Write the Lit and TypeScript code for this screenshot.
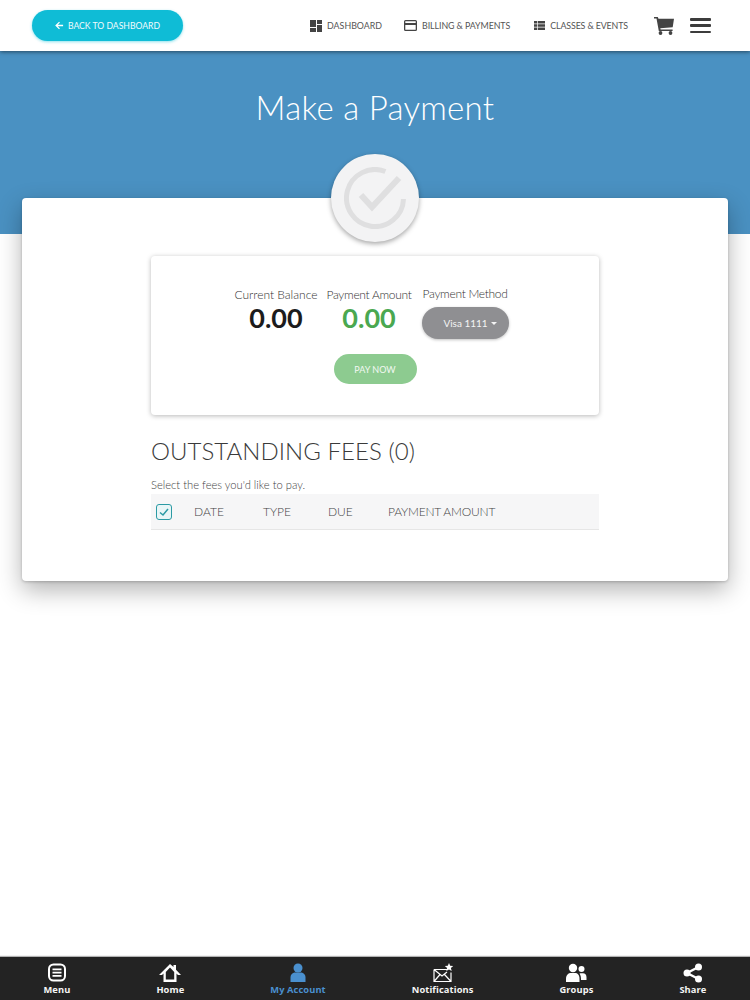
import { LitElement, html, css } from "lit";
import { customElement } from "lit/decorators.js";

@customElement("app-root")
export class AppRoot extends LitElement {
  static styles = css`
    :host { display: flex; flex-direction: column; height: 1000px; background: #fff; font-family: Lato, "Liberation Sans", sans-serif; color: #444; overflow: hidden; }
    .top { height: 51px; flex: none; display: flex; align-items: center; padding: 0 39px 0 32px; background: #fff; position: relative; z-index: 2; box-shadow: 0 1px 4px rgba(0,0,0,.5); }
    .back { width: 151px; height: 31px; border-radius: 16px; background: #0fbcd6; color: #f2fbfd; font-size: 8.65px; display: flex; align-items: center; justify-content: center; gap: 4px; box-shadow: 0 1px 3px rgba(0,188,212,.45); margin-top: -1px; }
    .back svg { width: 9px; height: 9px; }
    .links { margin-left: auto; display: flex; align-items: center; }
    .link { display: flex; align-items: center; gap: 5px; font-size: 8.85px; color: #555; white-space: nowrap; }
    .link svg { fill: #444; display: block; }
    .l1 { margin-right: 22px; }
    .l2 { margin-right: 24px; letter-spacing: -.08px; }
    .l3 { margin-right: 26px; letter-spacing: -.12px; }
    .cart { width: 20px; height: 18px; margin-right: 16px; fill: #444; display: block; }
    .burger { width: 21px; height: 15px; display: flex; flex-direction: column; justify-content: space-between; }
    .burger i { display: block; height: 2.5px; background: #3c3c3c; border-radius: 1px; }
    .hero { height: 183px; flex: none; background: #4a91c2; color: #fff; text-align: center; }
    .hero h1 { margin: 0; padding-top: 33px; font-size: 33px; line-height: 46px; font-weight: 300; letter-spacing: .28px; }
    .card { position: relative; flex: none; margin: -36px 22px 0; height: 383px; background: #fff; border-radius: 4px; box-shadow: 0 9px 24px rgba(0,0,0,.3), 0 1px 3px rgba(0,0,0,.2); padding: 58px 129px 0; box-sizing: border-box; }
    .seal { position: absolute; left: 309px; top: -44px; width: 88px; height: 88px; border-radius: 50%; background: #f3f3f4; box-shadow: 0 2px 5px rgba(0,0,0,.35); display: flex; align-items: center; justify-content: center; }
    .seal svg { width: 62px; height: 62px; display: block; }
    .panel { height: 159px; border-radius: 4px; box-shadow: 0 1px 5px rgba(0,0,0,.28); display: flex; flex-direction: column; align-items: center; padding-top: 29px; box-sizing: border-box; }
    .cols { display: flex; align-items: flex-start; gap: 9px; margin-right: 7px; }
    .col { display: flex; flex-direction: column; align-items: center; }
    .col.m { margin-left: 1px; }
    .lab { font-size: 12px; font-weight: 300; color: #333; line-height: 20px; white-space: nowrap; }
    .lab.t { letter-spacing: -.3px; }
    .lab.up { margin-top: -1px; }
    .val { font-size: 27px; font-weight: 700; line-height: 28px; color: #1c1c1c; margin-top: -1px; }
    .val.g { color: #4aa850; }
    .sel { width: 87px; height: 32px; margin-top: 3px; border-radius: 16px; background: #8f8f92; color: #f4f4f4; font-size: 10px; display: flex; align-items: center; justify-content: center; gap: 3px; padding-left: 10px; box-sizing: border-box; box-shadow: 0 1px 3px rgba(0,0,0,.25); }
    .caret { width: 0; height: 0; border-left: 3px solid transparent; border-right: 3px solid transparent; border-top: 3px solid #f4f4f4; }
    .pay { margin-top: 15px; width: 83px; height: 30px; border-radius: 15px; background: #8dcb90; color: #f2f8f2; font-size: 9px; display: flex; align-items: center; justify-content: center; }
    h2 { margin: 20px 0 0; font-size: 24px; line-height: 32px; font-weight: 300; color: #3a3a3a; letter-spacing: .05px; }
    .hint { margin: 10px 0 1px; font-size: 11.2px; line-height: 16px; font-weight: 300; color: #444; }
    .thead { height: 36px; background: #f6f6f7; border-bottom: 1px solid #e6e6e6; display: flex; align-items: center; font-size: 12px; font-weight: 300; color: #444; box-sizing: border-box; }
    .box { width: 16px; height: 16px; box-sizing: border-box; border: 1.5px solid #2b9aa4; border-radius: 3px; margin-left: 5px; background: #e9f6f7; display: flex; align-items: center; justify-content: center; }
    .box svg { width: 10px; height: 10px; }
    .h1 { margin-left: 22px; width: 69px; }
    .h2 { width: 65px; }
    .h3 { width: 60px; }
    .h4 { letter-spacing: -.2px; }
    .nav { margin-top: auto; height: 43px; flex: none; box-sizing: border-box; padding: 6px 43.5px 0; background: #232323; display: flex; justify-content: space-between; box-shadow: 0 -1px 1px rgba(0,0,0,.3); font-family: "Open Sans", sans-serif; font-weight: 700; font-size: 9.3px; color: #f5f5f5; }
    .it { display: flex; flex-direction: column; align-items: center; white-space: nowrap; }
    .it svg { width: 22px; height: 20px; display: block; fill: #fff; }
    .it span { line-height: 12px; margin-top: 1px; letter-spacing: .1px; }
    .it.on { color: #4a90cf; }
    .it.on svg { fill: #4a90cf; }
  `;

  render() {
    return html`
      <div class="top">
        <div class="back">
          <svg viewBox="0 0 10 10" fill="none" stroke="#fff" stroke-width="1.4"><path d="M9 5H1.5M5 1.2 1.2 5 5 8.8"/></svg>
          BACK TO DASHBOARD
        </div>
        <div class="links">
          <div class="link l1"><svg width="12" height="12" viewBox="0 0 12 12"><path d="M0 0h6v7H0zM7 0h5v4H7zM0 8h6v4H0zM7 5h5v7H7z"/></svg>DASHBOARD</div>
          <div class="link l2"><svg width="13" height="11" viewBox="0 0 13 11"><path fill-rule="evenodd" d="M1.5 0h10A1.5 1.5 0 0 1 13 1.5v8a1.5 1.5 0 0 1-1.5 1.5h-10A1.5 1.5 0 0 1 0 9.5v-8A1.5 1.5 0 0 1 1.5 0zM1.3 1.3v1.7h10.4V1.3zM1.3 5v4.7h10.4V5z"/></svg>BILLING &amp; PAYMENTS</div>
          <div class="link l3"><svg width="11" height="9" viewBox="0 0 11 9"><path d="M0 0h3v2.5H0zM3.7 0H11v2.5H3.7zM0 3.2h3v2.6H0zM3.7 3.2H11v2.6H3.7zM0 6.5h3V9H0zM3.7 6.5H11V9H3.7z"/></svg>CLASSES &amp; EVENTS</div>
          <svg class="cart" viewBox="0 0 20 18"><path d="M0 0h3.8l.7 1.8H20l-1.300 8.400-12.400 1 .3 1.300h12v1.600H4.800L2.500 1.500H0z"/><circle cx="6.500" cy="16" r="1.900"/><circle cx="16.500" cy="16" r="1.900"/></svg>
          <div class="burger"><i></i><i></i><i></i></div>
        </div>
      </div>
      <div class="hero"><h1>Make a Payment</h1></div>
      <div class="card">
        <div class="seal">
          <svg viewBox="0 0 62 62" fill="none" stroke="#dfdfe0" stroke-width="5"><path d="M41.400 4.500A28.500 28.500 0 1 0 59.500 32"/><path d="M17 28l11 12 27-29" stroke-width="6"/></svg>
        </div>
        <div class="panel">
          <div class="cols">
            <div class="col"><div class="lab">Current Balance</div><div class="val">0.00</div></div>
            <div class="col"><div class="lab t">Payment Amount</div><div class="val g">0.00</div></div>
            <div class="col m"><div class="lab t up">Payment Method</div><div class="sel">Visa 1111 <span class="caret"></span></div></div>
          </div>
          <div class="pay">PAY NOW</div>
        </div>
        <h2>OUTSTANDING FEES (0)</h2>
        <div class="hint">Select the fees you'd like to pay.</div>
        <div class="thead">
          <div class="box"><svg viewBox="0 0 10 10" fill="none" stroke="#2b9aa4" stroke-width="1.500"><path d="M1 5.500 4 8l5-6"/></svg></div>
          <div class="h1">DATE</div><div class="h2">TYPE</div><div class="h3">DUE</div><div class="h4">PAYMENT AMOUNT</div>
        </div>
      </div>
      <div class="nav">
        <div class="it"><svg viewBox="0 0 22 20"><rect x="3" y="1.500" width="16" height="16" rx="4.500" fill="none" stroke="#fff" stroke-width="2"/><path d="M6.500 5.500h9v1.800h-9zM6.500 8.700h9v1.800h-9zM6.500 11.900h9v1.800h-9z"/></svg><span>Menu</span></div>
        <div class="it"><svg viewBox="0 0 22 20"><path fill-rule="evenodd" d="M11 1l3.500 3V2h2.500v4.800l5 5.200h-3l-1.500-1.500v8.500H4.500V10.500L3 12H0zM11 4.500 6.800 9v7.500h8.400V9z"/></svg><span>Home</span></div>
        <div class="it on"><svg viewBox="0 0 22 20"><circle cx="11" cy="5" r="4.500"/><path d="M3.500 19v-4.500C3.500 11 6 9.500 8.500 9.500h5c2.500 0 5 1.500 5 5V19z"/></svg><span>My Account</span></div>
        <div class="it"><svg viewBox="0 0 22 20"><path d="M2 6.500h13M2 6.500v12h17v-9M2 6.500l8 6.500 5-4M2 18.500l6-7M19 18.500l-6.500-7" fill="none" stroke="#fff" stroke-width="1.200"/><path d="M17 0l1.200 2.800 3 .2-2.300 2 .8 3L17 6.400 14.300 8l.8-3-2.300-2 3-.2z"/></svg><span>Notifications</span></div>
        <div class="it"><svg viewBox="0 0 22 20"><circle cx="8" cy="5" r="4.200"/><path d="M1 19v-3.500C1 12 3.500 10 6 10h4c2.500 0 4.500 2 4.500 5.500V19z"/><circle cx="16.500" cy="6" r="3"/><path d="M15.500 10.200h2.500c2 0 3.500 1.500 3.500 4V17h-5.500c0-2.500-.2-4.800-1.500-6.500z"/></svg><span>Groups</span></div>
        <div class="it"><svg viewBox="0 0 22 20"><circle cx="16.500" cy="4" r="3.500"/><circle cx="16.500" cy="16" r="3.500"/><circle cx="5" cy="10" r="3.500"/><path d="M5 10 16.500 4M5 10l11.500 6" stroke="#fff" stroke-width="2.500" fill="none"/></svg><span>Share</span></div>
      </div>
    `;
  }
}
